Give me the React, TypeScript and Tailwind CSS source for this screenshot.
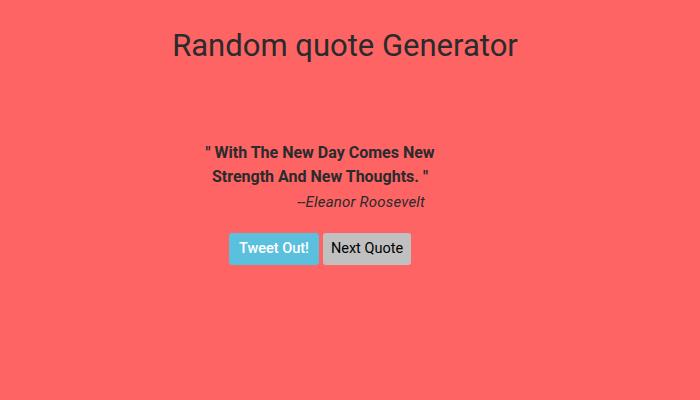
export default function App() {
  return (
    <div className="w-[700px] h-[400px] bg-[#fe6464] text-[#292b2c] flex flex-col items-center" style={{ fontFamily: "Roboto, 'Helvetica Neue', Arial, sans-serif" }}>
      <h1 className="mt-[27px] ml-[-10px] text-[31px] leading-[38px] font-normal">Random quote Generator</h1>
      <div className="mt-[76px] w-[250px] mr-[60px] flex flex-col">
        <p className="text-[16px] leading-[24px] font-bold text-center">" With The New Day Comes New Strength And New Thoughts. "</p>
        <p className="text-[15px] leading-[22px] italic text-right pr-[20px] mt-[2px] tracking-[0.2px]">--Eleanor Roosevelt</p>
      </div>
      <div className="mt-[20px] mr-[60px] flex gap-[4px]">
        <button className="h-[32px] w-[90px] rounded-[3px] bg-[#5bc0de] text-white text-[14.5px] font-medium">Tweet Out!</button>
        <button className="h-[32px] w-[88px] rounded-[3px] bg-[#c0c0c0] text-black text-[14.5px]">Next Quote</button>
      </div>
    </div>
  );
}
